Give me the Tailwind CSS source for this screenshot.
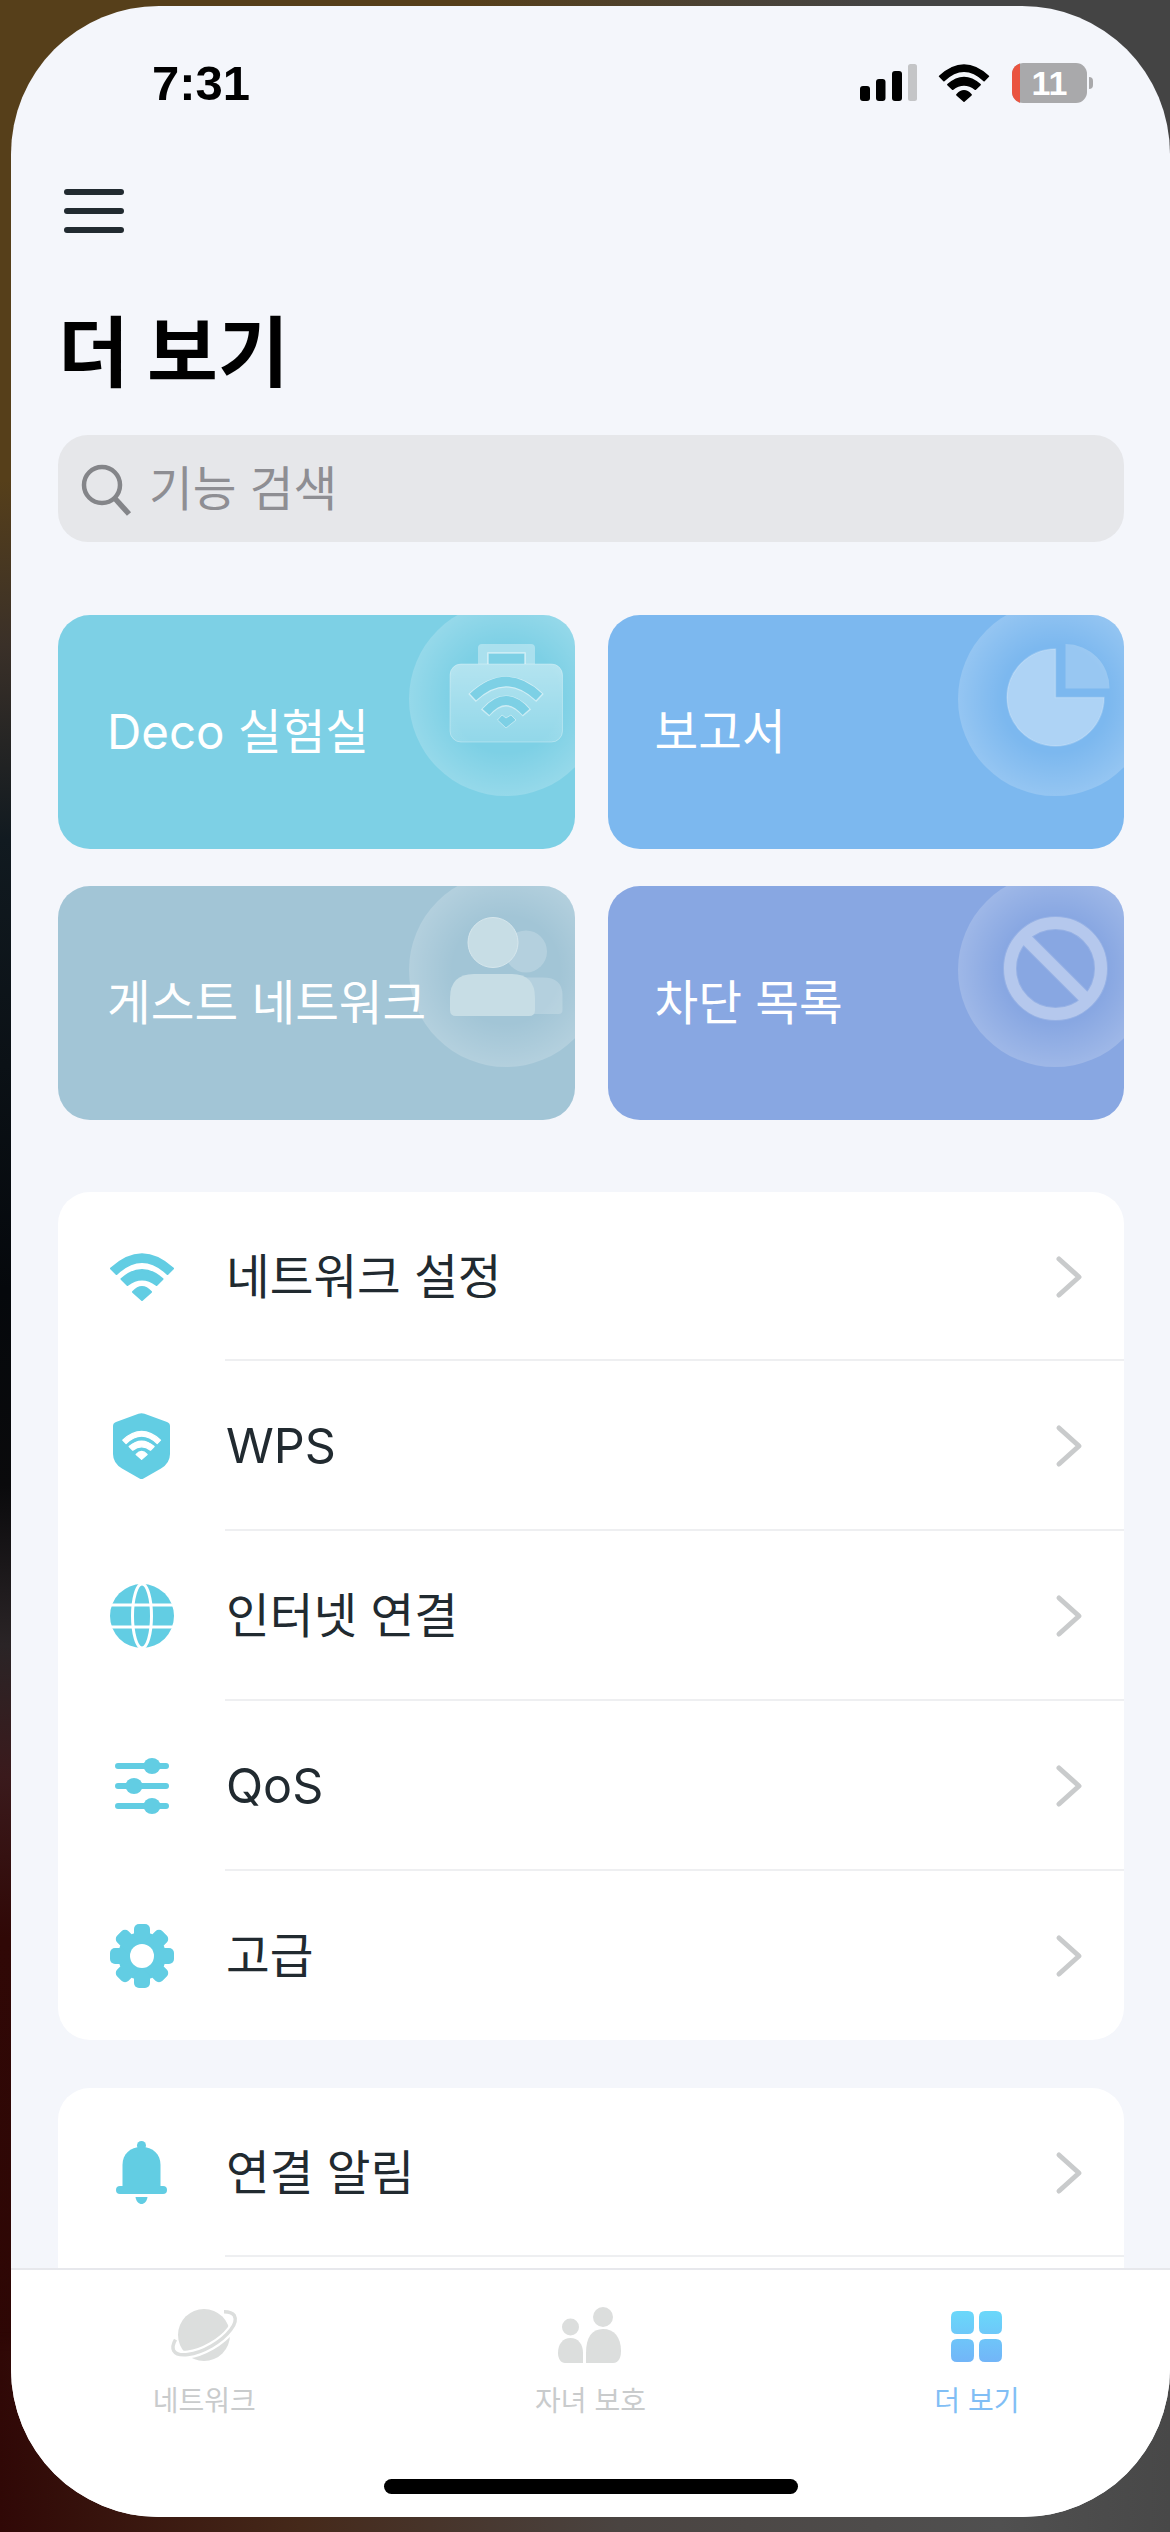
<!DOCTYPE html>
<html lang="ko">
<head>
  <meta charset="UTF-8" />
  <title>더 보기</title>
  <meta name="viewport" content="width=device-width, initial-scale=1.0"/>
  <script src="https://cdn.jsdelivr.net/npm/@tailwindcss/browser@4"></script>
</head>
<body class="[font-family:Inter,'Noto_Sans_CJK_KR',sans-serif]">
  <div class="relative w-[1170px] h-[2532px] overflow-hidden pl-[11px] pt-[6px] pb-[15px]">
    <!-- wallpaper behind the phone screen -->
    <div class="absolute inset-0 flex">
      <div class="w-[585px] h-full bg-[linear-gradient(180deg,#563f1a_0,#563f1a_480px,#3a3028_645px,#111a20_840px,#05080c_1290px,#0a0a0c_1485px,#2a2426_1645px,#3a1a1c_1776px,#300806_1938px,#2d0604_2532px)]"></div>
      <div class="w-[585px] h-full bg-[#464646]"></div>
    </div>
    <div class="absolute left-0 top-0 w-full h-[150px] bg-[linear-gradient(90deg,#563f1a_40%,#444_75%)]"></div>
    <div class="absolute left-0 bottom-0 w-full h-[200px] bg-[linear-gradient(90deg,#300806_0,#45291a_300px,#4a4441_620px,#505050_1000px,#484848_1170px)] [mask-image:linear-gradient(180deg,transparent_0,black_20px)]"></div>

    <div class="relative h-full rounded-[148px] bg-[#f4f6fb] overflow-hidden flex flex-col">
      <div class="flex-1 min-h-0 overflow-hidden">
        <!-- status bar -->
        <div class="h-[154px] flex items-center justify-between">
          <span class="ml-[141px] text-[49px] leading-none font-bold text-black [font-family:'Liberation_Sans',sans-serif]">7:31</span>
          <div class="mr-[77px] flex items-center">
            <svg width="58" height="38" viewBox="0 0 58 38" class="block">
              <rect x="1" y="22" width="10" height="15" rx="3" fill="#000"/>
              <rect x="17" y="15" width="9.5" height="22" rx="3" fill="#000"/>
              <rect x="33" y="7" width="10" height="30" rx="3" fill="#000"/>
              <rect x="49" y="0" width="9" height="37" rx="2.5" fill="#c4c5c7"/>
            </svg>
            <svg width="52" height="38" viewBox="0 0 66 48" class="block ml-[21px]">
              <g fill="#000" stroke="#000" stroke-width="2" stroke-linejoin="round">
                <path d="M2 15.5 Q33 -13 64 15.5 L58.5 21 Q33 -3 7.5 21 Z"/>
                <path d="M12.5 26 Q33 8 53.5 26 L47.5 32 Q33 21 18.5 32 Z"/>
                <path d="M24 39 Q33 29 42 39 L33 47 Z"/>
              </g>
            </svg>
            <div class="relative ml-[22px] w-[75px] h-[40px] rounded-[11px] bg-[#a9a9ab] overflow-hidden flex items-center justify-center">
              <div class="absolute left-0 top-0 h-full w-[8px] bg-[#ea5440]"></div>
              <span class="relative text-[34px] leading-none font-bold text-white [font-family:'Liberation_Sans',sans-serif]">11</span>
            </div>
            <div class="ml-[2px] w-[4px] h-[12px] rounded-r-full bg-[#a9a9ab]"></div>
          </div>
        </div>

        <div class="pl-[47px] pr-[46px]">
          <!-- menu button -->
          <div class="mt-[29px] ml-[6px] w-[60px] flex flex-col gap-[13px]">
            <div class="h-[6px] rounded-full bg-[#212a30]"></div>
            <div class="h-[6px] rounded-full bg-[#212a30]"></div>
            <div class="h-[6px] rounded-full bg-[#212a30]"></div>
          </div>

          <h1 class="mt-[83px] text-[77px] leading-[74px] font-bold text-black">더 보기</h1>

          <!-- search -->
          <div class="mt-[45px] h-[107px] rounded-[30px] bg-[#e6e7ea] flex items-center">
            <svg width="52" height="54" viewBox="0 0 52 54" class="ml-[23px] mt-[4px]" fill="none" stroke="#848589" stroke-width="4.5">
              <circle cx="21" cy="21" r="18"/>
              <path d="M33.5 34 L48 50" stroke-width="5.5"/>
            </svg>
            <span class="ml-[16px] text-[47.5px] leading-none text-[#8e8e93]">기능 검색</span>
          </div>

          <!-- shortcut cards -->
          <div class="mt-[73px] grid grid-cols-2 gap-x-[33px] gap-y-[37px]">
            <div class="relative h-[234px] rounded-[32px] bg-[#7dd0e5] overflow-hidden flex items-center pl-[49px]">
              <span class="relative z-10 text-[47.5px] leading-none text-white">Deco 실험실</span>
              <div class="absolute left-[351px] top-[-13px] w-[194px] h-[194px] rounded-full bg-[radial-gradient(circle_closest-side,transparent_55%,rgba(255,255,255,.19)_100%)]">
                <svg width="194" height="194" viewBox="0 0 194 194" class="block">
                  <defs>
                    <linearGradient id="caseFill" x1="0" y1="0" x2="0" y2="1">
                      <stop offset="0" stop-color="#fff" stop-opacity=".42"/>
                      <stop offset="1" stop-color="#fff" stop-opacity=".16"/>
                    </linearGradient>
                  </defs>
                  <path d="M69 62 V46 Q69 42 73 42 H122 Q126 42 126 46 V62 H116 V51 H79 V62 Z" fill="#fff" fill-opacity=".35"/>
                  <rect x="41" y="62" width="112.5" height="78" rx="11" fill="url(#caseFill)" stroke="#fff" stroke-opacity=".3" stroke-width="1"/>
                  <path d="M79 62 V51 H116 V62" fill="none" stroke="#fff" stroke-opacity=".55" stroke-width="1.5"/>
                  <g fill="none" stroke="#fff" stroke-opacity=".45" stroke-width="11">
                    <path d="M63 96 Q97 64 131 96"/>
                    <path d="M76 111 Q97 87 118 111"/>
                  </g>
                  <g fill="none" stroke="#7dd0e5" stroke-width="9">
                    <path d="M64 95 Q97 64 130 95"/>
                    <path d="M77 110 Q97 87 117 110"/>
                  </g>
                  <path d="M88.5 118 L93 113 L97 116 L102 113 L107 118 L97 126 Z" fill="#7dd0e5" stroke="#fff" stroke-opacity=".45" stroke-width="1"/>
                </svg>
              </div>
            </div>

            <div class="relative h-[234px] rounded-[32px] bg-[#7cb8ef] overflow-hidden flex items-center pl-[47px]">
              <span class="relative z-10 text-[47.5px] leading-none text-white">보고서</span>
              <div class="absolute left-[350px] top-[-13px] w-[194px] h-[194px] rounded-full bg-[radial-gradient(circle_closest-side,transparent_55%,rgba(255,255,255,.19)_100%)]">
                <svg width="194" height="194" viewBox="0 0 194 194" class="block">
                  <path d="M97.5 47 V95.5 H146 A48.5 48.5 0 1 1 97.5 47 Z" fill="#fff" fill-opacity=".38" stroke="#fff" stroke-opacity=".2" stroke-width="1.5"/>
                  <path d="M107.5 42 A44 44 0 0 1 151.5 86.5 H107.5 Z" fill="#fff" fill-opacity=".22"/>
                </svg>
              </div>
            </div>

            <div class="relative h-[234px] rounded-[32px] bg-[#a2c5d6] overflow-hidden flex items-center pl-[49px]">
              <span class="relative z-10 text-[47.5px] leading-none text-white">게스트 네트워크</span>
              <div class="absolute left-[351px] top-[-13px] w-[194px] h-[194px] rounded-full bg-[radial-gradient(circle_closest-side,transparent_55%,rgba(255,255,255,.19)_100%)]">
                <svg width="194" height="194" viewBox="0 0 194 194" class="block">
                  <circle cx="117" cy="78.5" r="21" fill="#fff" fill-opacity=".2"/>
                  <path d="M110 104.5 H134 Q153.5 104.5 153.5 122 V137 Q153.5 141 149.5 141 H120 Z" fill="#fff" fill-opacity=".2"/>
                  <circle cx="84" cy="69.5" r="25" fill="#c7dde5" stroke="#d6e6ec" stroke-width="1"/>
                  <path d="M41 125 Q41 101 65 101 H103 Q126 101 126 125 V137 Q126 143 120 143 H47 Q41 143 41 137 Z" fill="#c7dde5"/>
                </svg>
              </div>
            </div>

            <div class="relative h-[234px] rounded-[32px] bg-[#88a7e2] overflow-hidden flex items-center pl-[47px]">
              <span class="relative z-10 text-[47.5px] leading-none text-white">차단 목록</span>
              <div class="absolute left-[350px] top-[-13px] w-[194px] h-[194px] rounded-full bg-[radial-gradient(circle_closest-side,transparent_55%,rgba(255,255,255,.19)_100%)]">
                <svg width="194" height="194" viewBox="0 0 194 194" class="block">
                  <g fill="none" stroke="#fff" stroke-width="14" opacity=".12">
                    <circle cx="97.5" cy="95.5" r="45.5"/>
                    <path d="M65 63 L130 128"/>
                  </g>
                  <g fill="none" stroke="#fff" stroke-width="12" opacity=".3">
                    <circle cx="97.5" cy="95.5" r="45.5"/>
                    <path d="M65 63 L130 128"/>
                  </g>
                </svg>
              </div>
            </div>
          </div>

          <!-- settings list -->
          <div class="mt-[72px] rounded-[32px] bg-white overflow-hidden">
            <div class="relative h-[169px] flex items-center">
              <div class="w-[168px] pl-[51px] shrink-0 flex items-center">
                <svg width="66" height="48" viewBox="0 0 66 48" class="block">
                  <g fill="#62cde3" stroke="#62cde3" stroke-width="2" stroke-linejoin="round">
                    <path d="M2 15.5 Q33 -13 64 15.5 L58.5 21 Q33 -3 7.5 21 Z"/>
                    <path d="M12.5 26 Q33 8 53.5 26 L47.5 32 Q33 21 18.5 32 Z"/>
                    <path d="M24 39 Q33 29 42 39 L33 47 Z"/>
                  </g>
                </svg>
              </div>
              <span class="flex-1 text-[47.5px] leading-none text-[#212a30]">네트워크 설정</span>
              <svg width="28" height="44" viewBox="0 0 28 44" class="mr-[41px]" fill="none" stroke="#c9cbcc" stroke-width="5" stroke-linecap="round" stroke-linejoin="round"><path d="M4 4 L24 22 L4 40"/></svg>
              <div class="absolute left-[167px] right-0 bottom-0 h-[2px] bg-[#eeeff1]"></div>
            </div>
            <div class="relative h-[170px] flex items-center">
              <div class="w-[168px] pl-[55px] shrink-0 flex items-center">
                <svg width="57" height="66" viewBox="0 0 57 66" class="block">
                  <path d="M25.5 .8 Q28.5 -.2 31.5 .8 L54 9 Q57 10 57 13 V41 Q57 50 48 55.5 L30.5 65.5 Q28.5 66.5 26.5 65.5 L9 55.5 Q0 50 0 41 V13 Q0 10 3 9 Z" fill="#62cde3"/>
                  <g transform="translate(8.5 17.7) scale(.61)" fill="#fff" stroke="#fff" stroke-width="2" stroke-linejoin="round">
                    <path d="M2 15.5 Q33 -13 64 15.5 L58.5 21 Q33 -3 7.5 21 Z"/>
                    <path d="M12.5 26 Q33 8 53.5 26 L47.5 32 Q33 21 18.5 32 Z"/>
                    <path d="M24 39 Q33 29 42 39 L33 47 Z"/>
                  </g>
                </svg>
              </div>
              <span class="flex-1 text-[48.5px] leading-none text-[#212a30]">WPS</span>
              <svg width="28" height="44" viewBox="0 0 28 44" class="mr-[41px]" fill="none" stroke="#c9cbcc" stroke-width="5" stroke-linecap="round" stroke-linejoin="round"><path d="M4 4 L24 22 L4 40"/></svg>
              <div class="absolute left-[167px] right-0 bottom-0 h-[2px] bg-[#eeeff1]"></div>
            </div>
            <div class="relative h-[170px] flex items-center">
              <div class="w-[168px] pl-[52px] shrink-0 flex items-center">
                <svg width="64" height="64" viewBox="0 0 64 64" class="block">
                  <circle cx="32" cy="32" r="32" fill="#62cde3"/>
                  <g fill="none" stroke="#fff" stroke-width="3">
                    <ellipse cx="32" cy="32" rx="9.5" ry="32"/>
                    <path d="M0 21 H64 M0 43 H64"/>
                  </g>
                </svg>
              </div>
              <span class="flex-1 text-[47.5px] leading-none text-[#212a30]">인터넷 연결</span>
              <svg width="28" height="44" viewBox="0 0 28 44" class="mr-[41px]" fill="none" stroke="#c9cbcc" stroke-width="5" stroke-linecap="round" stroke-linejoin="round"><path d="M4 4 L24 22 L4 40"/></svg>
              <div class="absolute left-[167px] right-0 bottom-0 h-[2px] bg-[#eeeff1]"></div>
            </div>
            <div class="relative h-[170px] flex items-center">
              <div class="w-[168px] pl-[57px] shrink-0 flex items-center">
                <svg width="54" height="58" viewBox="0 0 54 58" class="block">
                  <g stroke="#62cde3" stroke-width="6" stroke-linecap="round">
                    <path d="M3 9 H51 M3 29 H51 M3 49 H51"/>
                  </g>
                  <g fill="#62cde3">
                    <ellipse cx="37" cy="9" rx="8.5" ry="8"/>
                    <ellipse cx="19" cy="29" rx="8.5" ry="8"/>
                    <ellipse cx="37" cy="49" rx="8.5" ry="8"/>
                  </g>
                </svg>
              </div>
              <span class="flex-1 text-[48.5px] leading-none text-[#212a30]">QoS</span>
              <svg width="28" height="44" viewBox="0 0 28 44" class="mr-[41px]" fill="none" stroke="#c9cbcc" stroke-width="5" stroke-linecap="round" stroke-linejoin="round"><path d="M4 4 L24 22 L4 40"/></svg>
              <div class="absolute left-[167px] right-0 bottom-0 h-[2px] bg-[#eeeff1]"></div>
            </div>
            <div class="relative h-[169px] flex items-center">
              <div class="w-[168px] pl-[52px] shrink-0 flex items-center">
                <svg width="64" height="64" viewBox="-32 -32 64 64" class="block">
                  <g fill="#62cde3">
                    <circle r="24"/>
                    <rect x="-8" y="-32" width="16" height="64" rx="5"/>
                    <rect x="-8" y="-32" width="16" height="64" rx="5" transform="rotate(45)"/>
                    <rect x="-8" y="-32" width="16" height="64" rx="5" transform="rotate(90)"/>
                    <rect x="-8" y="-32" width="16" height="64" rx="5" transform="rotate(135)"/>
                  </g>
                  <circle r="12" fill="#fff"/>
                </svg>
              </div>
              <span class="flex-1 text-[47.5px] leading-none text-[#212a30]">고급</span>
              <svg width="28" height="44" viewBox="0 0 28 44" class="mr-[41px]" fill="none" stroke="#c9cbcc" stroke-width="5" stroke-linecap="round" stroke-linejoin="round"><path d="M4 4 L24 22 L4 40"/></svg>
            </div>
          </div>

          <div class="mt-[48px] rounded-[32px] bg-white overflow-hidden">
            <div class="relative h-[169px] flex items-center">
              <div class="w-[168px] pl-[58px] shrink-0 flex items-center">
                <svg width="51" height="63" viewBox="0 0 51 63" class="block">
                  <g fill="#62cde3">
                    <circle cx="25.5" cy="4.5" r="4.5"/>
                    <path d="M6.5 45 V24 C6.5 13 14 6 25.5 6 C37 6 44.5 13 44.5 24 V45 Z"/>
                    <rect x="0" y="45" width="51" height="8" rx="4"/>
                    <path d="M19.5 56 H31.5 C31 60.5 28 63 25.5 63 C23 63 20 60.5 19.5 56 Z"/>
                  </g>
                </svg>
              </div>
              <span class="flex-1 text-[47.5px] leading-none text-[#212a30]">연결 알림</span>
              <svg width="28" height="44" viewBox="0 0 28 44" class="mr-[41px]" fill="none" stroke="#c9cbcc" stroke-width="5" stroke-linecap="round" stroke-linejoin="round"><path d="M4 4 L24 22 L4 40"/></svg>
              <div class="absolute left-[167px] right-0 bottom-0 h-[2px] bg-[#eeeff1]"></div>
            </div>
            <div class="h-[169px]"></div>
          </div>
        </div>
      </div>

      <!-- tab bar -->
      <div class="relative h-[249px] shrink-0 bg-white border-t-2 border-[#e7e8ec] grid grid-cols-3">
        <div class="flex flex-col items-center pt-[37px]">
          <svg width="66" height="56" viewBox="0 0 66 56" class="block overflow-visible">
            <circle cx="33" cy="28" r="26" fill="#dcdedd"/>
            <g transform="rotate(-30 33 26)" fill="none">
              <path d="M-2 26 A35 15 0 0 0 68 26" stroke="#fff" stroke-width="8"/>
              <path d="M5 17.500 A35 15 0 0 0 -2 26 A35 15 0 0 0 68 26 A35 15 0 0 0 61 17.500" stroke="#dcdedd" stroke-width="3.500"/>
            </g>
          </svg>
          <span class="mt-[24px] text-[28px] leading-none text-[#c9cbcc]">네트워크</span>
        </div>
        <div class="flex flex-col items-center pt-[37px]">
          <svg width="64" height="56" viewBox="0 0 64 56" class="block">
            <g fill="#dcdedd">
              <circle cx="45" cy="10" r="10"/>
              <path d="M28 46 C28 30 34 22 45 22 C56 22 63 30 63 44 C63 50 61 56 55 56 H28 Z"/>
              <circle cx="12.5" cy="20" r="8.5"/>
              <path d="M0 46 C0 37 5 31 12.5 31 C20 31 25 37 25 46 V56 H7 C3 56 0 52 0 46 Z"/>
            </g>
          </svg>
          <span class="mt-[24px] text-[28px] leading-none text-[#c9cbcc]">자녀 보호</span>
        </div>
        <div class="flex flex-col items-center pt-[41px]">
          <svg width="52" height="52" viewBox="0 0 52 52" class="block">
            <defs>
              <linearGradient id="gridTop" x1="0" y1="0" x2="0" y2="1">
                <stop offset="0" stop-color="#6ad8fa"/>
                <stop offset="1" stop-color="#72b5f8"/>
              </linearGradient>
            </defs>
            <path fill="url(#gridTop)" d="M6 0 H17 Q23 0 23 6 V17 Q23 23 17 23 H6 Q0 23 0 17 V6 Q0 0 6 0 Z M34 0 H45 Q51 0 51 6 V17 Q51 23 45 23 H34 Q28 23 28 17 V6 Q28 0 34 0 Z M6 28 H17 Q23 28 23 34 V45 Q23 51 17 51 H6 Q0 51 0 45 V34 Q0 28 6 28 Z M34 28 H45 Q51 28 51 34 V45 Q51 51 45 51 H34 Q28 51 28 45 V34 Q28 28 34 28 Z"/>
          </svg>
          <span class="mt-[24px] text-[28px] leading-none text-[#81bef5]">더 보기</span>
        </div>
        <div class="absolute left-[373px] bottom-[23px] w-[414px] h-[15px] rounded-full bg-black"></div>
      </div>
    </div>
  </div>
</body>
</html>
